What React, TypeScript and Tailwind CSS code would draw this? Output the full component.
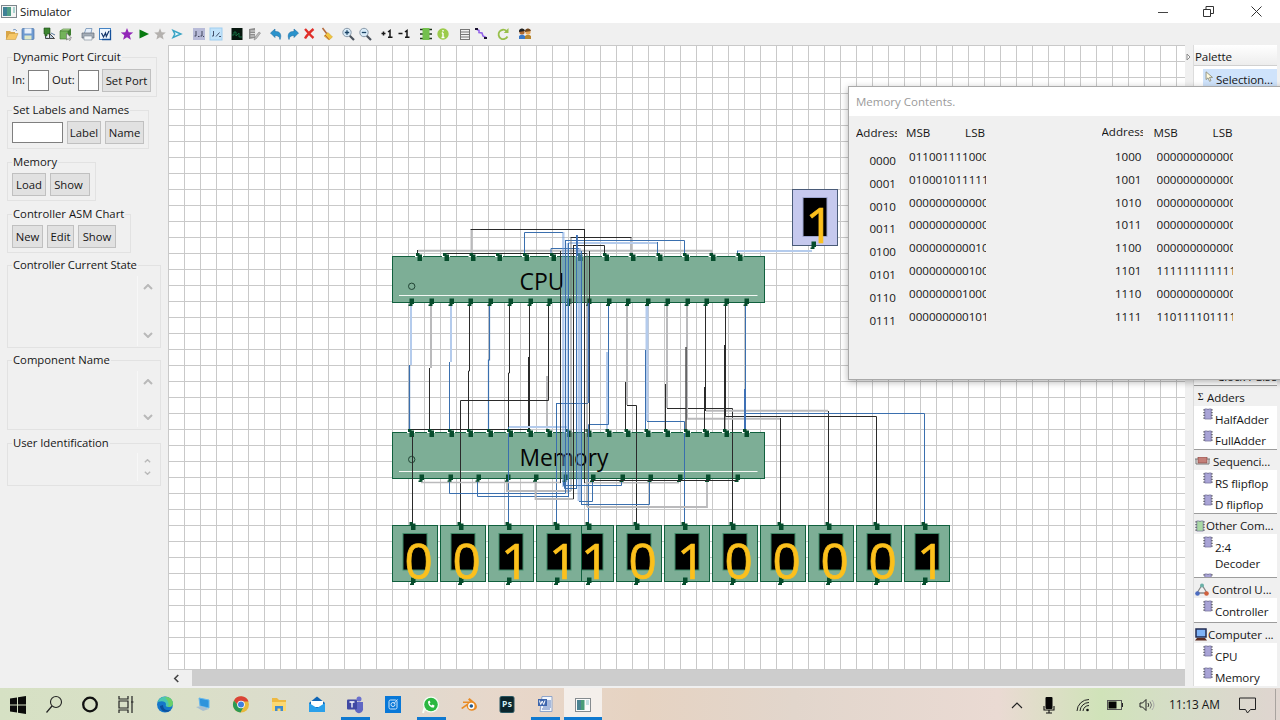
import React from "react";

/* ---------- toolbar icons, each drawn on a 14x14 board ---------- */
const toolbar: { gap: string; draw: React.ReactNode }[] = [
  { gap: "ml-[5px]", draw: <><path d="M1 12V4h4l1 1h4v2" fill="#d9a648" /><path d="M1 12.5 4 6.5h9L10.500 12.500z" fill="#f6c766" stroke="#c99a45" strokeWidth=".6" /><path d="M8 3q2-2 4 1" stroke="#7c9cc4" fill="none" /></> },
  { gap: "ml-[2px]", draw: <><rect x="1" y="1.500" width="12" height="11" rx="1" fill="#6f9bd1" stroke="#4a73a8" strokeWidth=".7" /><rect x="3.500" y="1.500" width="7" height="5" fill="#e8f0fa" /><rect x="3.500" y="8.500" width="7" height="4" fill="#dfe9c8" /></> },
  { gap: "ml-[7px]", draw: <><path d="M2 1h6v6H5v2H3V7H2z" fill="#3d8430" stroke="#1c4a17" strokeWidth=".6" /><path d="M7.500 11.500v-5l5 5zM3.500 9v2.500h4" stroke="#333" fill="#b9cbe0" strokeWidth=".9" /><path d="M9 6l4 2" stroke="#55779c" /></> },
  { gap: "ml-[3px]", draw: <><path d="M1 4l3-2h8l-3 2z" fill="#b8dd9a" stroke="#3d7a2b" strokeWidth=".6" /><path d="M1 4h8v8H1z" fill="#74b35b" stroke="#3d7a2b" strokeWidth=".6" /><path d="M9 4l3-2v6l-3 3z" fill="#3f7e30" /><path d="M7.500 6v7l1.700-1.500 1.300 2 1-.5-1-2h2z" fill="#eee" stroke="#666" strokeWidth=".6" /></> },
  { gap: "ml-[8px]", draw: <><path d="M3.500 6 5 1.500h6L10 6" fill="#e6effa" stroke="#6f8fb5" strokeWidth=".8" /><path d="M1 6h12v5H1z" fill="#a4adb7" stroke="#666f7a" strokeWidth=".7" /><path d="M3 9h8v4H3z" fill="#f3f6f9" stroke="#7b8794" strokeWidth=".6" /></> },
  { gap: "ml-[3px]", draw: <><rect x="1.500" y="1.500" width="11" height="11" fill="#eef7ff" stroke="#4583c4" /><path d="M12.500 3v9.500H4" stroke="#14509b" fill="none" strokeWidth="1.300" /><path d="M3.500 6 5.500 10l2-4 .8 3.500L11 4" stroke="#12356b" fill="none" strokeWidth="1.200" /></> },
  { gap: "ml-[8px]", draw: <path d="M7 1l1.700 4.200 4.500.3-3.500 2.800 1.200 4.500L7 10.300l-3.900 2.500 1.200-4.500L.8 5.500l4.500-.3z" fill="#9226b8" /> },
  { gap: "ml-[3px]", draw: <path d="M2.500 2.500 12 7l-9.500 4.500z" fill="#087a10" /> },
  { gap: "ml-[2px]", draw: <path d="M7 1.300l1.600 4 4.200.3-3.200 2.700 1 4.200L7 10.200l-3.600 2.300 1-4.200-3.200-2.700 4.200-.3z" fill="#b4b1ae" /> },
  { gap: "ml-[3px]", draw: <path d="M3 3.500 11 7l-8 3.500 1.800-3.500z" fill="#eefaff" stroke="#39a4c4" strokeWidth="1.400" /> },
  { gap: "ml-[8px]", draw: <><rect x="1" y="1" width="12" height="12" fill="#b8bbd8" /><path d="M4 4v5H2.500M10 4v5H8.500M6 9.500h1.500M12 9.500h-1" stroke="#40455c" fill="none" /></> },
  { gap: "ml-[3px]", draw: <><rect x="1" y="1" width="12" height="12" fill="#c2e3fa" stroke="#9ecdf0" /><path d="M4.500 4v5H3M7 9.500l3.500-4M10 9.500h2" stroke="#43506c" fill="none" /></> },
  { gap: "ml-[7px]", draw: <><rect x="1.500" y="1" width="11" height="12" fill="#06160e" /><path d="M2 8h2V5h2v4l3-3v4h3" stroke="#18824b" fill="none" strokeWidth=".8" /></> },
  { gap: "ml-[3px]", draw: <><path d="M2 2l6-1v10l-6 1z" fill="#8d8d8d" /><path d="M3.500 4h5M3.500 6.500h5M3.500 9h4" stroke="#ddd" /><path d="M7 13l1-3 4-5 1.500 1-4 5.500z" fill="#bcbcbc" stroke="#777" strokeWidth=".5" /></> },
  { gap: "ml-[8px]", draw: <path d="M1.500 6 6 2v2.500c5-.3 7 3 5 8-.5-3-2-4-5-4V10.500z" fill="#2a93cc" stroke="#1f6fa6" strokeWidth=".6" /> },
  { gap: "ml-[3px]", draw: <path d="M12.500 6 8 2v2.500c-5-.3-7 3-5 8 .5-3 2-4 5-4V10.500z" fill="#2a93cc" stroke="#1f6fa6" strokeWidth=".6" /> },
  { gap: "ml-[2px]", draw: <path d="M3 2c2 2 5 6 8.500 9M11.500 2C8 5 5 8 3 11.500" stroke="#e02f2a" strokeWidth="2.400" fill="none" /> },
  { gap: "ml-[4px]", draw: <><path d="M2.500 1 7 7" stroke="#b46a3c" strokeWidth="1.500" /><path d="M4 9l4-3.500 4.500 4.500L9 13z" fill="#f2c53d" stroke="#c79a24" strokeWidth=".5" /><path d="M5 8l4 4.500" stroke="#b5573a" /></> },
  { gap: "ml-[7px]", draw: <><path d="M8.500 8.500 13 13" stroke="#4a525d" strokeWidth="2.200" /><circle cx="6" cy="5.500" r="4.200" fill="#d8ebf8" stroke="#8a9aaa" /><path d="M3.800 5.500h4.400M6 3.300v4.400" stroke="#1b4466" strokeWidth="1.300" /></> },
  { gap: "ml-[3px]", draw: <><path d="M8.500 8.500 13 13" stroke="#4a525d" strokeWidth="2.200" /><circle cx="6" cy="5.500" r="4.200" fill="#d8ebf8" stroke="#8a9aaa" /><path d="M3.800 5.500h4.400" stroke="#1b4466" strokeWidth="1.300" /></> },
  { gap: "ml-[8px]", draw: <path d="M1.500 6.500h4M3.500 4.500v4M8 5l2-1.500V10M8 10.300h4.500" stroke="#161616" fill="none" strokeWidth="1.500" /> },
  { gap: "ml-[3px]", draw: <path d="M1.500 6.500h4M8 5l2-1.500V10M8 10.300h4.500" stroke="#161616" fill="none" strokeWidth="1.500" /> },
  { gap: "ml-[8px]", draw: <><path d="M1 2.500h12M1 7h12M1 11.500h12" stroke="#1f331b" strokeWidth="1.500" /><rect x="3.500" y="1" width="7" height="12" fill="#73c04d" /></> },
  { gap: "ml-[3px]", draw: <><circle cx="7" cy="7" r="5.700" fill="#9ccb4b" /><path d="M7 6v4.500M5.800 6H7M5.500 10.500h3M7 3v1.500" stroke="#fff" strokeWidth="1.400" /></> },
  { gap: "ml-[8px]", draw: <><rect x="2.500" y="2.500" width="9" height="10" fill="#f2f2f2" stroke="#777" /><path d="M2 5h10M2 7.500h10M2 10h10" stroke="#777" /></> },
  { gap: "ml-[2px]", draw: <><path d="M2 2l3 1.500v2l3 .5 1 3 3 1.500" stroke="#9161e8" strokeWidth="1.600" fill="none" /><path d="M1 1h3v2H1zM10 10h3v2h-3z" fill="#1a1230" /></> },
  { gap: "ml-[8px]", draw: <><path d="M10.500 4A4.700 4.700 0 1 0 11.500 9.500" stroke="#98bf4b" strokeWidth="1.800" fill="none" /><path d="M12.500 1v5H7.800z" fill="#98bf4b" /></> },
  { gap: "ml-[8px]", draw: <><circle cx="4" cy="5" r="2.600" fill="#b06a32" /><path d="M1 5a3 3 0 0 1 6-1z" fill="#222" /><path d="M1 12V9q3-2.500 6 0v3z" fill="#3b79c8" /><circle cx="10" cy="5" r="2.600" fill="#e8a758" /><path d="M7 5a3 3 0 0 1 6-1z" fill="#70461e" /><path d="M7 12V9q3-2.500 6 0v3z" fill="#b8862f" /></> },
];

function AppGlyph() {
  return (
    <svg viewBox="0 0 16 13" className="h-[13px] w-4 shrink-0">
      <rect x=".5" y=".5" width="15" height="12" fill="#f4f4f4" stroke="#7d868c" />
      <rect x="2" y="2" width="8" height="9" fill="#4f9d86" />
      <rect x="2" y="2" width="4" height="9" fill="#3f8196" />
      <rect x="12" y="2" width="2" height="6" fill="#a9d3cf" />
    </svg>
  );
}

/* ---------- left panel ---------- */
function Group({ title, box, children }: { title: string; box: string; children?: React.ReactNode }) {
  return (
    <section className={`ml-[7px] flex shrink-0 flex-col border border-[#e2e2e2] ${box}`}>
      <h2 className="-mt-[9px] mb-px ml-[4px] h-4 self-start whitespace-nowrap bg-[#f0f0f0] px-px leading-4">{title}</h2>
      {children}
    </section>
  );
}

function Btn({ size, children }: { size: string; children: string }) {
  return (
    <button className={`h-[23px] shrink-0 whitespace-nowrap border border-[#c0c0c0] bg-[#e1e1e1] text-center leading-[22px] ${size}`}>{children}</button>
  );
}

function Spinner({ box, small }: { box: string; small?: boolean }) {
  return (
    <div className={`mr-[3px] flex w-[20px] flex-col items-center justify-between self-end border-l border-[#f7f7f7] ${box}`}>
      <svg viewBox="0 0 10 6" className={small ? "h-[4px] w-[7px]" : "h-[6px] w-[10px]"}><path d="M1 5l4-4 4 4" fill="none" stroke="#b9b9b9" strokeWidth="2" /></svg>
      <svg viewBox="0 0 10 6" className={small ? "h-[4px] w-[7px]" : "h-[6px] w-[10px]"}><path d="M1 1l4 4 4-4" fill="none" stroke="#b9b9b9" strokeWidth="2" /></svg>
    </div>
  );
}

/* ---------- circuit ---------- */
const K = "#2a2a2a", G = "#bababc", B = "#3a6fae", L = "#b4cbec", D = "#3f70b5";
const busPins = [411, 431, 451, 470, 490, 510, 530, 549, 568.5, 588.5, 608.5, 627.5, 647.5, 667, 687, 706, 726, 746];
const cpuTop = [419, 446, 472.5, 499, 526, 553, 579.5, 606, 632.5, 659.5, 686, 712.5, 739.5];
const memBottom = [421, 450, 478, 507.5, 535.5, 565, 592.5, 622, 650, 679.5, 707.5, 737];

const under: [string, number, string][] = [
  [G, 2, "M471.500 256V230"], [K, 1, "M470.500 229.500H584.500V483"],
  [G, 2, "M418 250.700H711.500V256"], [K, 1, "M446 253.500H587M417.500 256V250"],
  [B, 1, "M524.500 256V232.500H563"], [B, 1, "M551 256V248.500H579"],
  [G, 2, "M631 256V238"], [K, 1, "M570.500 237.500H631.500"],
  [B, 1, "M565.500 240.500H684.500V256"], [L, 2, "M568 243H657"], [B, 1, "M657.500 242V256"],
  [K, 1, "M573.500 245.500H604.500V256"],
  [L, 2, "M738 251H812"], [B, 1, "M737.500 256V250.500"],
  [L, 2, "M411 305V365"], [B, 1.3, "M409.500 365V433"],
  [G, 2, "M431 305V368"], [K, 1, "M429.500 368V433"],
  [L, 2, "M451 305V362"], [B, 1, "M449.500 362V433"],
  [K, 1, "M469.500 305V371H468.500V433"],
  [B, 1.2, "M489.500 305V360H488.500V433"],
  [K, 1, "M509.500 305V373H508.500V433"],
  [K, 1, "M529.500 305V433"], [K, 1, "M528.500 357V433"],
  [G, 2, "M547 376V433"], [K, 1, "M548.500 305V400.500H460.500V433"],
  [K, 1, "M411 429.500H530"],
  [L, 2, "M567 427H509"], [B, 1, "M508.500 427V433"],
  [B, 1, "M588 403.500H556.500V433"],
  [L, 2, "M607 352V433"], [B, 1, "M608.500 305V424.500H588.500V433"],
  [G, 2, "M627 305V405"], [K, 1, "M625.500 382V433M627 405.500H636.500V433"],
  [L, 3, "M647 305V421"], [B, 1, "M645.500 350V433M647 421.500H684.500V433"],
  [G, 2, "M667 305V408"], [K, 1, "M665.500 384V433M667 408.500H732.500V433"],
  [G, 2, "M687 305V418.700H780"], [K, 1.2, "M686 347V433"], [K, 1, "M780.500 418V526"],
  [G, 2, "M706 410.700H828"], [K, 1, "M705.500 305V411M704.500 387V433M828.500 411V526"],
  [K, 1, "M725.500 305V416.500H876.500V526"], [K, 1.4, "M724.700 345V433"],
  [B, 1, "M745.500 305V413.500H924.500V526"], [D, 2, "M745 389V433"],
];

const over: [string, number, string][] = [
  [K, 1, "M412.500 436V526M460.500 433V526"],
  [B, 1, "M508.500 433V526M556.500 403V526M588.500 425V526M684.500 433V526"],
  [K, 1, "M636.500 433V526M732.500 433V526"],
  [G, 1.5, "M421 482.500H561M584.500 482.700H679"],
  [B, 1, "M449.500 482V493.500H565.500"], [B, 1, "M477.500 482V496.500H568.500"],
  [G, 1.8, "M507 482V491H571"], [G, 1.8, "M535.500 482V499H573.500"],
  [B, 1, "M563.500 482V485.500H621.500V482"], [B, 1, "M564.500 482V488.500H576.500"],
  [B, 1, "M592.500 482V501.500H579"], [B, 1, "M649.500 482V504.500H581.500"],
  [G, 1.8, "M707 482V507H587"], [K, 1, "M592 480.500H737"],
  [K, 1, "M560.500 251V483"], [B, 1, "M565.500 240V493"],
  [B, 1, "M568.500 243V497"], [K, 1, "M573.500 245V499"],
  [B, 1, "M576.500 235V489"], [D, 1.800, "M577 235V256"],
  [B, 1, "M581.500 251V505"], [K, 1, "M584.500 229V483"],
  [K, 1, "M589.500 251V433"], [D, 1.500, "M588.500 303V403"],
];

/* wide half-transparent strands of the bus, tinting what they cross */
const strands: [string, number, string][] = [
  ["#6c9ade", 2.4, "M563.300 232V487"], ["#6c9ade", 1.800, "M567.500 243V493"], ["#777", 1.800, "M571 238V491"],
  ["#6c9ade", 3.5, "M579.300 248V501"], ["#777", 1.800, "M587 253V507"],
];

const leds: [number, string][] = [
  [568, "1"], [392, "0"], [440, "0"], [488, "1"], [536, "1"], [616, "0"], [664, "1"], [712, "0"], [760, "0"], [808, "0"], [856, "0"], [904, "1"],
];

function TopPin({ x, y }: { x: number; y: number }) {
  return <path d={`M${x - 3} ${y - 3}h3.500v1.500h2.500v6.500h-4.500v-5h-1.500z`} fill="#064c2c" />;
}
function FootPin({ x, y }: { x: number; y: number }) {
  return <path d={`M${x - 1.500} ${y - 4.500}h4.500v5.500h-1.500v2h-4v-1.500h1z`} fill="#064c2c" />;
}

function Block({ y, label, end, top, bottom }: { y: number; label: string; end: number; top: number[]; bottom: number[] }) {
  return (
    <g>
      <rect x="392.500" y={y + 0.5} width="372" height="46" fill="#7dae96" stroke="#11603e" />
      <path d={`M399 ${y + 39.500}H757.500`} stroke="#f2f7f3" />
      <circle cx="411.700" cy={y + (label === "CPU" ? 30.3 : 27.5)} r="3.200" fill="none" stroke="#173a2a" strokeWidth=".9" />
      <text x="519.500" y={y + 33.500} fontSize="23.500" textLength={end - 519} lengthAdjust="spacingAndGlyphs" fill="#050505">{label}</text>
      {top.map((x) => <path key={x} d={`M${x - 4} ${y + 0.5}h8`} stroke="#fff" strokeWidth="1" />)}
      {top.map((x) => <TopPin key={x} x={x} y={y} />)}
      {bottom.map((x) => <FootPin key={x} x={x} y={y + 47} />)}
    </g>
  );
}

function Led({ x, y, digit, fill }: { x: number; y: number; digit: string; fill: string }) {
  return (
    <g>
      <rect x={x + 0.5} y={y + 0.5} width="45" height="56" fill={fill} stroke="#11603e" />
      <rect x={x + 11} y={y + 8.500} width="24" height="36.500" fill="#000" stroke="#3f8a68" strokeWidth="1" />
      <TopPin x={x + 20.500} y={y} />
      <FootPin x={x + 20.500} y={y + 57} />
      <text x={x + (digit === "0" ? 12.5 : 13)} y={y + 53.700} fontSize="49.500" fill="#fcc01c" stroke="#fcc01c" strokeWidth=".7">{digit}</text>
    </g>
  );
}

function Circuit() {
  return (
    <svg viewBox="168 45 1017 625" className="h-[625px] w-[1017px] shrink-0">
      <defs>
        <pattern id="grid" x="168" y="45" width="16" height="16" patternUnits="userSpaceOnUse">
          <path d="M.5 0V16M0 .5H16" stroke="#c9c9c9" />
        </pattern>
      </defs>
      <rect x="168" y="45" width="1017" height="625" fill="#fff" />
      <rect x="168" y="45" width="1017" height="625" fill="url(#grid)" />
      {under.map(([c, w, d], i) => <path key={i} d={d} stroke={c} strokeWidth={w} fill="none" />)}
      <Block y={256} label="CPU" end={564} top={cpuTop} bottom={busPins} />
      <Block y={432} label="Memory" end={608} top={busPins} bottom={memBottom} />
      <g opacity=".5">
        {strands.map(([c, w, d], i) => <path key={i} d={d} stroke={c} strokeWidth={w} fill="none" />)}
      </g>
      {over.map(([c, w, d], i) => <path key={i} d={d} stroke={c} strokeWidth={w} fill="none" />)}
      {leds.map(([x, digit]) => <Led key={x} x={x} y={525} digit={digit} fill="#7dae96" />)}
      <rect x="792.500" y="189.500" width="45" height="56" fill="#c6c9ee" stroke="#4a5b78" />
      <rect x="803" y="197.500" width="24" height="39" fill="#000" stroke="#9da5cf" />
      <FootPin x={813} y={246} />
      <text x="805.500" y="243" fontSize="49.500" fill="#fcc01c" stroke="#fcc01c" strokeWidth=".7">1</text>
    </svg>
  );
}

/* ---------- palette ---------- */
function Chip({ fill = "#a9a4d6" }: { fill?: string }) {
  return (
    <svg viewBox="0 0 10 13" className="h-[12px] w-[10px] shrink-0">
      <path d="M0 2h10M0 5h10M0 8h10M0 11h10" stroke="#555" strokeWidth="1.300" />
      <path d="M1.500 1h2.500q1 1.300 2 0h2.500v11h-7z" fill={fill} stroke="#6a6792" strokeWidth=".7" />
    </svg>
  );
}
function Item({ name }: { name: string }) {
  return (
    <div className="flex h-[21.500px] shrink-0 items-center pl-[9px]">
      <div className="-mt-[5px]"><Chip /></div>
      <span className="ml-[2px] mt-[5px] whitespace-nowrap">{name}</span>
    </div>
  );
}
function Drawer({ icon, name, box, children }: { icon: React.ReactNode; name: string; box: string; children: React.ReactNode }) {
  return (
    <section className={`shrink-0 overflow-hidden border-t border-[#9c9c9c] bg-white ${box}`}>
      <h3 className="flex h-[20px] items-center gap-px whitespace-nowrap bg-[#f0f0f0] pl-px pt-[3px]">{icon}<span>{name}</span></h3>
      {children}
    </section>
  );
}

function Palette() {
  return (
    <aside className="flex w-[84px] shrink-0 flex-col border-l border-[#dcdcdc] bg-white text-[11.600px] tracking-[-0.100px]">
      <h2 className="h-[21px] shrink-0 border-b border-[#d0d0d0] bg-gradient-to-b from-white to-[#ededed] pl-px leading-[24px]">Palette</h2>
      <div className="ml-[9px] mt-[3px] flex h-[19px] shrink-0 items-center bg-[#cfe3fb]">
        <svg viewBox="0 0 10 14" className="-mt-[4px] ml-[2px] h-3 w-[9px]"><path d="M1 1v9l2.300-2 1.700 4 1.700-.7L5 7.500h3.500z" fill="#fffbe0" stroke="#8a8a76" /></svg>
        <span className="ml-[2px] mt-[3px]">Selection...</span>
      </div>
      <div className="flex h-[297px] shrink-0 items-end pl-[23px]"><span className="whitespace-nowrap leading-[16px]">Clock Pulse</span></div>
      <Drawer name="Adders" box="h-[64px]" icon={<span className="w-[11px] text-center font-serif text-[10px]">Σ</span>}>
        <Item name="HalfAdder" /><Item name="FullAdder" />
      </Drawer>
      <Drawer name="Sequenci..." box="h-[64px]" icon={<svg viewBox="0 0 15 9" className="mr-[2px] h-[9px] w-[15px]"><path d="M0 2h15M1 2v5h13V2" stroke="#777" fill="none" /><rect x="3" y="0" width="9" height="6" fill="#c47f78" stroke="#8b4c47" strokeWidth=".7" /></svg>}>
        <Item name="RS flipflop" /><Item name="D flipflop" />
      </Drawer>
      <Drawer name="Other Com..." box="h-[64px]" icon={<Chip fill="#a9d8a4" />}>
        <Item name="2:4" /><div className="h-[17px] pl-[21px] leading-[15px]">Decoder</div>
        <div className="pl-[9px]"><Chip /></div>
      </Drawer>
      <Drawer name="Control U..." box="h-[45px]" icon={<svg viewBox="0 0 14 13" className="mr-[2px] h-[13px] w-[14px]"><path d="M7 2 2 10h10z" fill="none" stroke="#888" strokeWidth="1.300" /><circle cx="7" cy="2.500" r="2" fill="#6bb0a8" /><circle cx="2.500" cy="10.500" r="2.300" fill="#4d6cc0" /><circle cx="11.500" cy="10.500" r="2.300" fill="#d0603c" /></svg>}>
        <Item name="Controller" />
      </Drawer>
      <Drawer name="Computer ..." box="h-[63px]" icon={<svg viewBox="0 0 12 13" className="h-[13px] w-[12px]"><rect x="1" y="1" width="10" height="8" fill="#7eb2f6" stroke="#1f2a52" strokeWidth="1.500" /><path d="M0 12.500 2 10h8l2 2.500z" fill="#5c2d22" /></svg>}>
        <Item name="CPU" /><Item name="Memory" />
      </Drawer>
    </aside>
  );
}

/* ---------- memory dialog ---------- */
const low: [string, string][] = [
  ["0000", "011001111000"], ["0001", "010001011111"], ["0010", "000000000000"], ["0011", "000000000000"],
  ["0100", "000000000010"], ["0101", "000000000100"], ["0110", "000000001000"], ["0111", "000000000101"],
];
const high: [string, string][] = [
  ["1000", "000000000000"], ["1001", "000000000000"], ["1010", "000000000000"], ["1011", "000000000000"],
  ["1100", "000000000000"], ["1101", "111111111111"], ["1110", "000000000000"], ["1111", "110111101111"],
];

function MemTable({ rows, drop, head, gap }: { rows: [string, string][]; drop: string; head: string; gap: string }) {
  return (
    <div className="flex">
      <div className="w-[41px]">
        <div className={`h-[16px] w-[41px] overflow-hidden whitespace-nowrap leading-4 ${head}`}>Address</div>
        <div className={drop}>
          {rows.map(([a]) => <div key={a} className="h-[22.800px] pr-px text-right leading-[22.800px]">{a}</div>)}
        </div>
      </div>
      <div className={gap}>
        <div className="-ml-[3px] mt-[9px] flex h-4 w-[79px] justify-between leading-4"><span>MSB</span><span>LSB</span></div>
        <div className="mt-[5px]">
          {rows.map(([a, v]) => <div key={a} className="h-[22.800px] w-[76.500px] overflow-hidden whitespace-nowrap leading-[22.800px]">{v}</div>)}
        </div>
      </div>
    </div>
  );
}

/* ---------- taskbar ---------- */
const apps: { state?: "open" | "active"; draw: React.ReactNode }[] = [
  { draw: <path d="M1 3.500l7-1V9.500H1zM9 2.300 17 1v8.500H9zM1 10.500h7v7l-7-1zM9 10.500h8V19l-8-1.300z" fill="#0b0b0b" /> },
  { draw: <><circle cx="11" cy="7" r="5.500" fill="none" stroke="#222" strokeWidth="1.100" /><path d="M7 11 1.500 17.500" stroke="#222" strokeWidth="1.200" /></> },
  { draw: <circle cx="9" cy="9.500" r="6.800" fill="none" stroke="#111" strokeWidth="2.300" /> },
  { draw: <path d="M2 1v3h9V1M2 18v-3h9v3M2 6h9v7H2zM15 1v17M14 7h2.500" fill="none" stroke="#222" strokeWidth="1.200" /> },
  { draw: <><circle cx="9" cy="9.500" r="8" fill="#1577c9" /><path d="M1.500 7C4 0 15 0 17 8q0 4-5 4-3 0-2-3-1-4-8.500-2z" fill="#4bc7b0" /><path d="M9 2c5-.5 8 3 8 6.500q0 3.500-5 3.500 2-4-3-10z" fill="#6ccf6a" /><path d="M7 10c0 5 5 6 8 5-4 4-11 1-11-4z" fill="#0c4f9c" /></> },
  { draw: <><path d="M5 3l10 2v8L6 11z" fill="#2e94dc" stroke="#66b8ed" /><path d="M2 12l5-1 8 3-6 2z" fill="#a8bfd0" /></> },
  { draw: <><circle cx="9" cy="9.500" r="8" fill="#e8b93c" /><path d="M2 5.500a8 8 0 0 1 14.500 1H9l-2.600 4.500z" fill="#da4437" /><path d="M2 5.500A8 8 0 0 0 8.500 17.500l3.200-6-5.300-.5z" fill="#2b9a54" /><circle cx="9" cy="9.500" r="3.800" fill="#fff" /><circle cx="9" cy="9.500" r="3" fill="#3f7fe0" /></> },
  { draw: <><path d="M2 3h5l2 2h7v11H2z" fill="#eeb941" /><path d="M2 7h14v9H2z" fill="#fbd873" /><path d="M5 16v-5h8v5h-2.500v-2.500h-3V16z" fill="#3e8ad1" /></> },
  { draw: <><path d="M1 8l8-6.500L17 8v9H1z" fill="#0f65b5" /><path d="M3 6h12v6H3z" fill="#fff" /><path d="M1 8l8 5 8-5v9H1z" fill="#2aa0ea" /></> },
  { state: "open", draw: <><circle cx="13" cy="4" r="2.500" fill="#6a70cf" /><path d="M9 7h8v6a4 4 0 0 1-8 2z" fill="#6067c4" /><rect x="1" y="4.500" width="10" height="10" rx="1" fill="#4049a4" /><path d="M3.500 7h5M6 7v5.500" stroke="#fff" strokeWidth="1.300" /></> },
  { draw: <><rect x="1" y="1" width="16" height="17" fill="#0878d8" /><rect x="5" y="5" width="8" height="9" rx="1.500" fill="none" stroke="#cfe6fa" /><circle cx="9" cy="9.500" r="2" fill="none" stroke="#cfe6fa" /><path d="M10 8.500l3.500-4" stroke="#cfe6fa" /></> },
  { state: "open", draw: <><circle cx="9" cy="9.500" r="8" fill="#f4fff6" /><path d="M1 18l1.500-5" stroke="#f4fff6" strokeWidth="2" /><circle cx="9" cy="9.500" r="6.800" fill="#2bb741" /><path d="M6 6.500c0 4 3 6.500 6 6l.5-2-2-1-1 1q-1.500-.7-2-2l1-1-1-2z" fill="#fff" /></> },
  { draw: <><path d="M1 13l7-5H3V6.500h7L8 4.500 9.500 3l6 5q3 4 0 6.500-5 3-8-1l-1-2.500-4 3z" fill="#e98b24" /><circle cx="11.300" cy="11" r="3.200" fill="#fff" /><circle cx="11.300" cy="11" r="1.800" fill="#23598c" /></> },
  { draw: <><rect x="2" y="1.500" width="14" height="16" rx="1.500" fill="#0b252c" stroke="#265460" /><text x="4" y="12" fontSize="8.500" fontWeight="700" fill="#d4f1f6" textLength="10">Ps</text></> },
  { state: "open", draw: <><path d="M6 1.500h10v15H4z" fill="#f4f7fc" stroke="#8fa5cb" /><path d="M9 6h6M9 8h6M7 10h8M7 12h8M6 14h8" stroke="#5a7cbb" /><rect x="2" y="4" width="9" height="7" fill="#3d66ad" /><path d="M3.500 5.500l1.200 4 1.500-3.500L7.700 9.500l1.300-4" stroke="#fff" fill="none" /></> },
  { state: "active", draw: <><rect x="1.500" y="3.500" width="15" height="13" fill="#fafafa" stroke="#858b8f" /><rect x="3" y="5" width="7.500" height="10" fill="#4a9c78" /><rect x="3" y="5" width="4" height="10" fill="#4b8392" /><rect x="12" y="5" width="3" height="5" fill="#c5dfe2" /></> },
];

function Taskbar() {
  return (
    <footer className="flex h-8 shrink-0 items-stretch bg-[linear-gradient(90deg,#d6e1c4_0%,#dadfc8_15%,#dddad0_28%,#e8d7ca_40%,#e6d3c2_50%,#e2d6cc_62%,#eadad3_78%,#d0e3b9_86%,#d6ddc8_92%,#dfd5d0_100%)]">
      {apps.map((a, i) => (
        <div
          key={i}
          className={`flex shrink-0 flex-col items-center justify-end ${i < 4 ? "w-[36px]" : "w-[38px]"} ${i === 4 ? "ml-[2px]" : ""} ${a.state === "active" ? "bg-[#f4efeb]" : ""}`}
        >
          <svg viewBox="0 0 18 19" className="mb-[3px] h-[19px] w-[18px]">{a.draw}</svg>
          <div className={`h-[3px] ${a.state === "active" ? "w-[38px] bg-[#0f79d0]" : a.state === "open" ? "w-[29px] bg-[#0f79d0]" : "w-px"}`} />
        </div>
      ))}
      <div className="flex flex-1 items-center justify-end pt-[2px]">
        <svg viewBox="0 0 12 8" className="mr-[20px] h-2 w-3"><path d="M1 7l5-5 5 5" stroke="#222" fill="none" strokeWidth="1.100" /></svg>
        <svg viewBox="0 0 12 18" className="mr-[21px] h-[18px] w-3"><rect x="2.500" y="1" width="7" height="12" rx="1" fill="#050505" /><path d="M1 10v4h10v-4M6 14v3M3 17h6" stroke="#111" fill="none" strokeWidth="1.100" /></svg>
        <svg viewBox="0 0 14 14" className="mr-[17px] h-[14px] w-[14px]"><g fill="none" stroke="#222"><path d="M1 13A12 12 0 0 1 13 1.500M4 13A9 9 0 0 1 13 4.500M7 13a6 6 0 0 1 6-5.500" /></g><circle cx="11.500" cy="12" r="1.300" fill="#111" /></svg>
        <svg viewBox="0 0 16 10" className="mr-[16px] h-[10px] w-4"><rect x=".5" y=".5" width="14" height="9" fill="none" stroke="#555" /><rect x="1.500" y="1.500" width="8" height="7" fill="#050505" /><path d="M15.500 3v4" stroke="#222" /></svg>
        <svg viewBox="0 0 16 14" className="mr-[14px] h-[14px] w-4"><path d="M1 5h2.500L7 1.500v11L3.500 9H1z" stroke="#222" fill="none" /><path d="M9 5q1.500 2 0 4" stroke="#333" fill="none" /><path d="M11 3.500q3 3.500 0 7" stroke="#777" fill="none" /><path d="M13 2q4 5 0 10" stroke="#aaa" fill="none" /></svg>
        <time className="w-[54px] whitespace-nowrap text-[11.900px] tracking-[-0.100px]">11:13 AM</time>
        <svg viewBox="0 0 17 17" className="ml-[16px] mr-[19px] h-[17px] w-[17px]"><path d="M.5 1h16v11.500h-5L8.500 16l-2-3.500h-6z" fill="none" stroke="#222" /></svg>
        <div className="mr-[4px] h-8 w-px bg-[#a8a39f]" />
      </div>
    </footer>
  );
}

export default function App() {
  return (
    <div className="relative flex h-[720px] w-[1280px] flex-col overflow-hidden bg-[#f0f0f0] font-['Open_Sans','Noto_Sans',sans-serif] text-[11.300px] text-[#161616]">
      <header className="flex h-[23px] shrink-0 items-center bg-white pl-px">
        <AppGlyph />
        <span className="ml-[3px] flex-1 text-[11.500px] tracking-[-0.100px]">Simulator</span>
        <svg viewBox="0 0 10 10" className="mr-[35px] h-[10px] w-[10px]"><path d="M0 5.500h10" stroke="#444" /></svg>
        <svg viewBox="0 0 11 11" className="mr-[37px] h-[11px] w-[11px]"><path d="M.5 3.500h7v7h-7zM3 3.500v-3h7.500v7H7.500" fill="none" stroke="#333" /></svg>
        <svg viewBox="0 0 11 11" className="mr-[18px] h-[11px] w-[11px]"><path d="M.5.5l10 10M10.500.5l-10 10" stroke="#333" /></svg>
      </header>
      <nav className="flex h-[22px] shrink-0 items-center">
        {toolbar.map((t, i) => <svg key={i} viewBox="0 0 14 14" className={`h-[14px] w-[14px] shrink-0 ${t.gap}`}>{t.draw}</svg>)}
      </nav>
      <main className="flex h-[643px] shrink-0">
        <aside className="flex w-[168px] shrink-0 flex-col">
          <Group title="Dynamic Port Circuit" box="mt-[12px] h-[40px] w-[150px]">
            <div className="ml-[4px] mt-[3px] flex items-center">
              <span className="w-[16px]">In:</span>
              <div className="h-[21px] w-[21px] border border-[#7f7f7f] bg-white" />
              <span className="ml-[3px] w-[26px]">Out:</span>
              <div className="h-[21px] w-[21px] border border-[#7f7f7f] bg-white" />
              <Btn size="ml-[3px] w-[49px]">Set Port</Btn>
            </div>
          </Group>
          <Group title="Set Labels and Names" box="mt-[13px] h-[39px] w-[142px]">
            <div className="ml-[4px] mt-[2px] flex items-center">
              <div className="h-[21px] w-[51px] border border-[#7f7f7f] bg-white" />
              <Btn size="ml-[4px] w-[34px]">Label</Btn>
              <Btn size="ml-[4px] w-[39px]">Name</Btn>
            </div>
          </Group>
          <Group title="Memory" box="mt-[13px] h-[39px] w-[89px]">
            <div className="ml-[4px] mt-[2px] flex">
              <Btn size="w-[34px]">Load</Btn>
              <Btn size="ml-[4px] w-[40px] pr-[3px]">Show</Btn>
            </div>
          </Group>
          <Group title="Controller ASM Chart" box="mt-[13px] h-[39px] w-[124px]">
            <div className="ml-[4px] mt-[2px] flex">
              <Btn size="w-[31px]">New</Btn>
              <Btn size="ml-[4px] w-[27px]">Edit</Btn>
              <Btn size="ml-[4px] w-[38px]">Show</Btn>
            </div>
          </Group>
          <Group title="Controller Current State" box="mt-[12px] h-[83px] w-[154px] tracking-[-0.100px]">
            <Spinner box="mt-[2px] h-[70px] pb-[8px] pt-[8px]" />
          </Group>
          <Group title="Component Name" box="mt-[12px] h-[70px] w-[154px]">
            <Spinner box="mt-[2px] h-[56px] pb-[7px] pt-[8px]" />
          </Group>
          <Group title="User Identification" box="mt-[13px] h-[43px] w-[154px] tracking-[-0.050px]">
            <Spinner small box="mt-[1px] h-[28px] pb-[6px] pt-[6px]" />
          </Group>
        </aside>
        <section className="flex w-[1017px] shrink-0 flex-col">
          <Circuit />
          <div className="flex h-4 items-center">
            <svg viewBox="0 0 8 10" className="ml-[5px] h-[9px] w-[7px]"><path d="M6 1 2 5l4 4" fill="none" stroke="#444" strokeWidth="1.800" /></svg>
            <div className="ml-[12px] h-4 flex-1 bg-[#cdcdcd]" />
          </div>
        </section>
        <div className="w-[8px] shrink-0 pl-px pt-[8px]">
          <svg viewBox="0 0 5 8" className="h-[8px] w-[5px]"><path d="M1 1l3 3-3 3z" fill="#fff" stroke="#8c8c8c" /></svg>
        </div>
        <div className="flex h-[641px]"><Palette /></div>
      </main>
      <Taskbar />

      <div role="dialog" className="absolute left-[848px] top-[86px] h-[294px] w-[440px] border border-[#a9a9a9] bg-[#f0f0f0] text-[11.600px] shadow-[0_2px_7px_rgba(0,0,0,0.3)]">
        <div className="h-[29px] bg-white pl-[7px] text-[11.500px] leading-[30px] text-[#9a9a9a]">Memory Contents.</div>
        <div className="flex pl-[7px]">
          <MemTable rows={low} drop="mt-[9px]" head="mt-[9px]" gap="ml-[12px]" />
          <div className="w-[116px]" />
          <MemTable rows={high} drop="mt-[6px]" head="mt-[8px]" gap="ml-[14px]" />
        </div>
      </div>
    </div>
  );
}
